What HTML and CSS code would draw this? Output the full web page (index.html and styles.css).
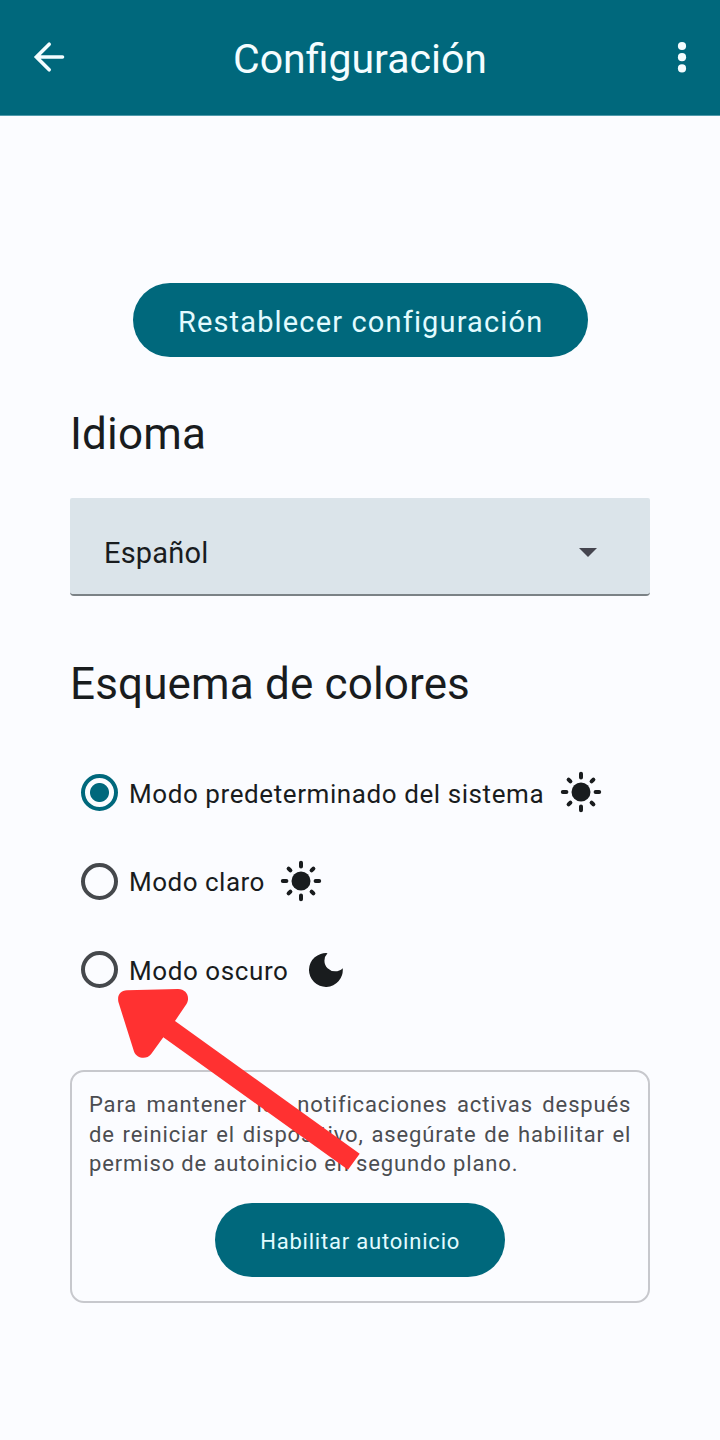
FILE: index.html
```html
<!DOCTYPE html>
<html lang="es">
<head>
<meta charset="utf-8">
<title>Configuración</title>
<link rel="stylesheet" href="styles.css">
</head>
<body>
<header class="bar">
  <svg class="back" viewBox="0 0 32 32"><path d="M29.500 16H3.500M16.200 3.200 3.400 16l12.800 12.800"/></svg>
  <h1 class="title">Configuración</h1>
  <svg class="more" viewBox="0 0 10 32"><circle cx="5" cy="5" r="4.1"/><circle cx="5" cy="16.2" r="4.1"/><circle cx="5" cy="27.4" r="4.1"/></svg>
</header>
<main class="content">
  <button class="pill reset">Restablecer configuración</button>
  <h2 class="heading">Idioma</h2>
  <div class="select"><span class="select-value">Español</span><svg class="caret" viewBox="0 0 18 9"><path d="M0 0h18L9 9z"/></svg></div>
  <h2 class="heading scheme">Esquema de colores</h2>
  <div class="options">
    <label class="option"><span class="radio checked"></span><span class="name">Modo predeterminado del sistema</span>
      <svg class="sun" viewBox="-21 -21 42 42"><circle r="9.5"/><path d="M0-18.2v3.6M0 14.6v3.6M-18.2 0h3.6M14.6 0h3.6M-12.4-12.4l1.8 1.8M10.6 10.6l1.8 1.8M-12.4 12.4l1.8-1.8M10.6-10.6l1.8-1.8"/></svg></label>
    <label class="option"><span class="radio"></span><span class="name name-light">Modo claro</span>
      <svg class="sun" viewBox="-21 -21 42 42"><circle r="9.5"/><path d="M0-18.2v3.6M0 14.6v3.6M-18.2 0h3.6M14.6 0h3.6M-12.4-12.4l1.8 1.8M10.6 10.6l1.8 1.8M-12.4 12.4l1.8-1.8M10.6-10.6l1.8-1.8"/></svg></label>
    <label class="option"><span class="radio"></span><span class="name">Modo oscuro</span>
      <svg class="moon" viewBox="0 0 34 34"><path d="M18.500 .2A16.900 16.900 0 1 0 33.700 15.200A10.500 10.500 0 0 1 18.500 .2z"/></svg></label>
  </div>
  <section class="card">
    <p class="note">Para mantener las notificaciones activas después de reiniciar el dispositivo, asegúrate de habilitar el permiso de autoinicio en segundo plano.</p>
    <button class="pill enable">Habilitar autoinicio</button>
  </section>
</main>
<svg class="pointer" viewBox="110 980 260 200"><path d="M118.400 1002C117 995 120.500 990.400 127 990.300L178 989C186.500 989 190.500 997 186.500 1004L175 1021L359.700 1153.700L348 1169.700L163.300 1037.300L151 1054.300C146.500 1060 136.500 1058.500 134 1051.500Z"/></svg>
</body>
</html>
```
FILE: styles.css
```css
* { box-sizing: border-box; }
body {
  margin: 0;
  width: 720px;
  height: 1440px;
  position: relative;
  overflow: hidden;
  background: #fbfcff;
  color: #191c1e;
  font-family: Roboto, "Liberation Sans", sans-serif;
}
.bar {
  height: 116px;
  padding: 0 33px;
  display: grid;
  grid-template-columns: 32px 1fr 10px;
  align-items: center;
  background: #00687c;
  border-bottom: 1px solid #4f9aab;
  color: #f4fdff;
}
.back { width: 32px; height: 32px; margin-bottom: 1px; fill: none; stroke: currentColor; stroke-width: 3.6; stroke-linecap: round; }
.title { margin: 2px 22px 0 0; font-size: 41px; font-weight: 400; line-height: 48px; text-align: center; }
.more { width: 10px; height: 32px; margin-bottom: 1px; fill: currentColor; }
.content { padding: 167.4px 69.7px 0 70px; display: flex; flex-direction: column; }
.pill {
  align-self: center;
  height: 74px;
  border: 0;
  padding: 3px 0 0;
  border-radius: 37px;
  background: #00687c;
  color: #e2fbff;
  font-family: inherit;
  text-align: center;
  white-space: nowrap;
}
.reset { width: 455px; padding-left: 1px; font-size: 29px; letter-spacing: 1.15px; }
.heading { margin: 50.6px 0 0; font-size: 44px; font-weight: 400; line-height: 52px; letter-spacing: .15px; }
.select {
  margin-top: 38px;
  height: 98px;
  padding: 13px 53.5px 0 34px;
  display: flex;
  align-items: center;
  justify-content: space-between;
  background: #dbe4ea;
  border-bottom: 2px solid #7b8286;
  border-radius: 2px 2px 4px 4px;
  font-size: 29px;
}
.select-value { padding-top: 1px; letter-spacing: .2px; }
.caret { width: 18px; height: 9px; fill: #45454f; }
.scheme { margin-top: 62px; }
.options { margin: 38px 0 0 11px; }
.option { height: 88.7px; display: flex; align-items: center; font-size: 26px; }
.radio {
  width: 37px;
  height: 37px;
  margin-right: 11px;
  border: 4px solid #45484c;
  border-radius: 50%;
}
.checked { border-color: #00687c; background: radial-gradient(circle, #00687c 9px, transparent 10px); }
.name { padding-top: 2.4px; letter-spacing: .58px; }
.name-light { margin-right: -1px; letter-spacing: .5px; }
.sun { width: 42px; height: 42px; margin-left: 16px; fill: #191c1e; }
.sun path { stroke: #191c1e; stroke-width: 4; stroke-linecap: round; }
.moon { width: 34px; height: 34px; margin-left: 20.5px; fill: #191c1e; }
.card {
  margin-top: 56px;
  height: 233px;
  padding: 18px 17px 0;
  display: flex;
  flex-direction: column;
  border: 2px solid #c7c8cd;
  border-radius: 14px;
}
.note { margin: 0; color: #4b4d51; font-size: 22px; line-height: 29.6px; letter-spacing: .86px; text-align: justify; }
.enable { margin-top: 24.2px; width: 290px; font-size: 22px; letter-spacing: .8px; }
.pointer { position: absolute; left: 110px; top: 980px; width: 260px; height: 200px; fill: #ff3131; }
```
